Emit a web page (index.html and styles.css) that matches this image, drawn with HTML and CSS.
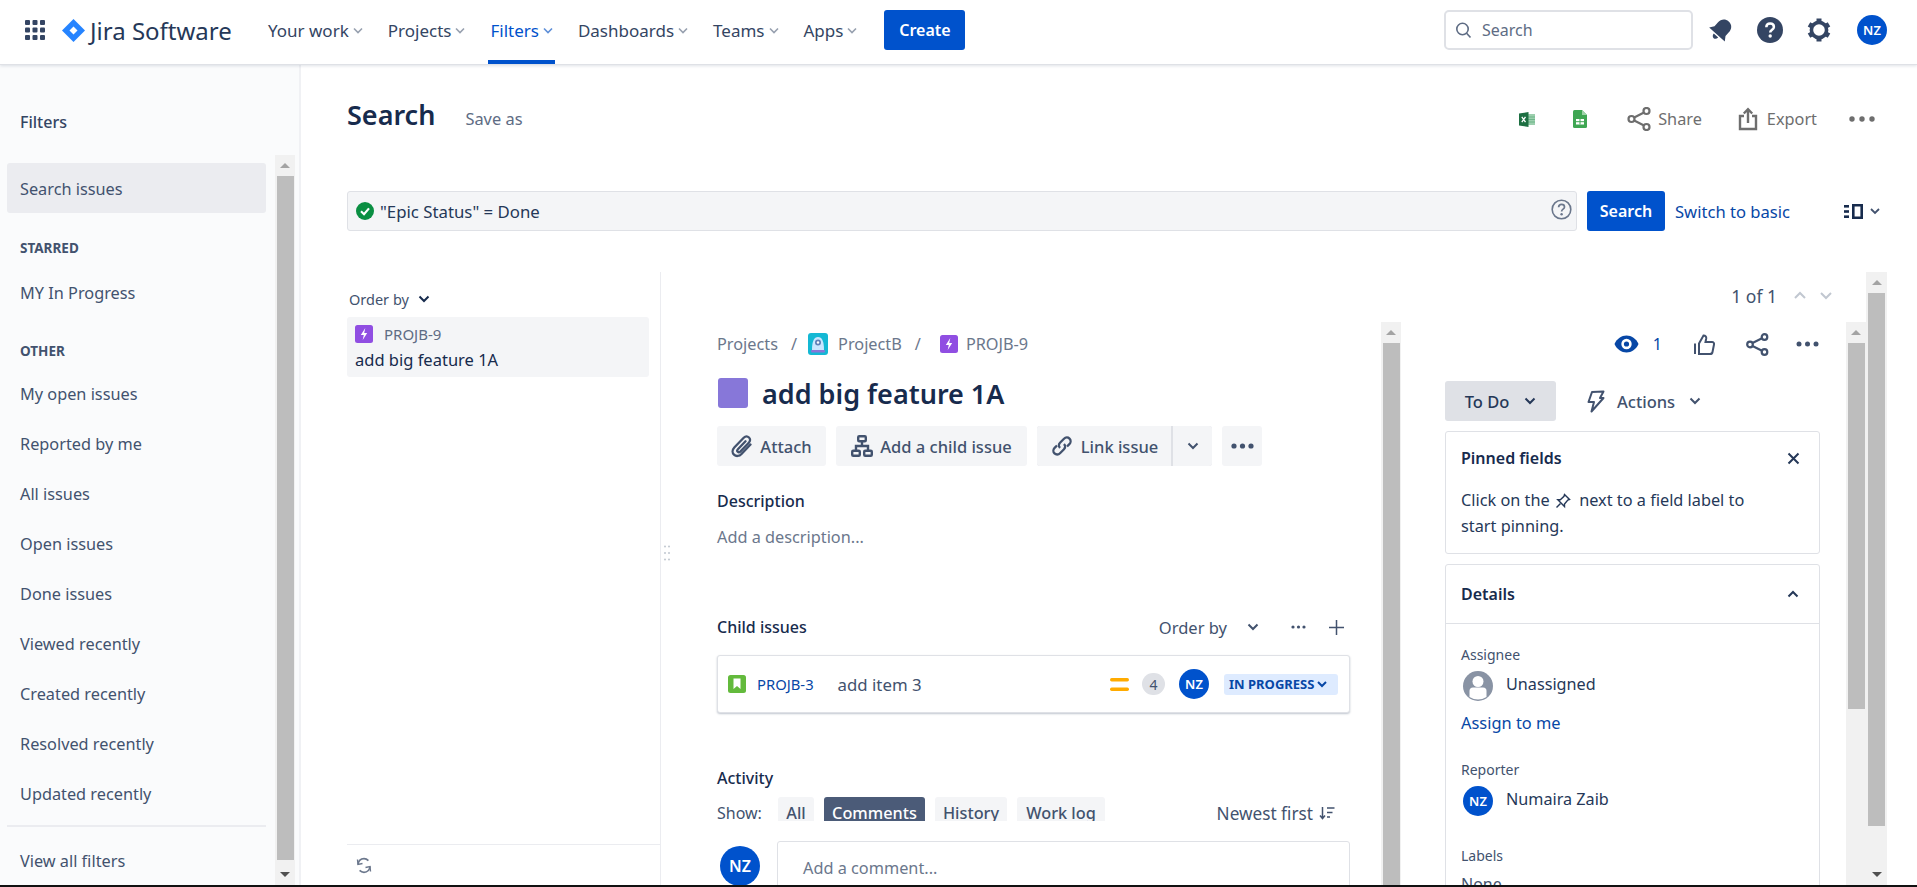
FILE: index.html
```html
<!DOCTYPE html>
<html lang="en">
<head>
  <meta charset="UTF-8">
  <title>Search - Jira</title>
  <link rel="stylesheet" href="styles.css">
</head>
<body>
<div class="page">

  <!-- top navigation -->
  <header class="topbar">
    <svg class="apps-icon" width="20" height="20" viewBox="0 0 20 20" fill="#344563"><rect width="5" height="5" rx="1"/><rect x="7.5" width="5" height="5" rx="1"/><rect x="15" width="5" height="5" rx="1"/><rect y="7.5" width="5" height="5" rx="1"/><rect x="7.5" y="7.5" width="5" height="5" rx="1"/><rect x="15" y="7.5" width="5" height="5" rx="1"/><rect y="15" width="5" height="5" rx="1"/><rect x="7.5" y="15" width="5" height="5" rx="1"/><rect x="15" y="15" width="5" height="5" rx="1"/></svg>
    <svg class="logo-mark" width="23" height="23" viewBox="0 0 23 23"><path d="M11.5 0 L23 11.5 L11.5 23 L0 11.5 Z" fill="#2684ff"/><path d="M11.5 7.5 L15.5 11.5 L11.5 15.5 L7.5 11.5 Z" fill="#fff"/></svg>
    <span class="logo-text">Jira Software</span>
    <nav class="nav">
      <a class="nav-item">Your work <svg class="nav-chev" width="10" height="7" viewBox="0 0 10 7"><path d="M1 1.5 L5 5.5 L9 1.5" fill="none" stroke="#97a0af" stroke-width="1.6"/></svg></a>
      <a class="nav-item">Projects <svg class="nav-chev" width="10" height="7" viewBox="0 0 10 7"><path d="M1 1.5 L5 5.5 L9 1.5" fill="none" stroke="#97a0af" stroke-width="1.6"/></svg></a>
      <a class="nav-item is-active">Filters <svg class="nav-chev" width="10" height="7" viewBox="0 0 10 7"><path d="M1 1.5 L5 5.5 L9 1.5" fill="none" stroke="#5e8fd8" stroke-width="1.6"/></svg></a>
      <a class="nav-item">Dashboards <svg class="nav-chev" width="10" height="7" viewBox="0 0 10 7"><path d="M1 1.5 L5 5.5 L9 1.5" fill="none" stroke="#97a0af" stroke-width="1.6"/></svg></a>
      <a class="nav-item">Teams <svg class="nav-chev" width="10" height="7" viewBox="0 0 10 7"><path d="M1 1.5 L5 5.5 L9 1.5" fill="none" stroke="#97a0af" stroke-width="1.6"/></svg></a>
      <a class="nav-item">Apps <svg class="nav-chev" width="10" height="7" viewBox="0 0 10 7"><path d="M1 1.5 L5 5.5 L9 1.5" fill="none" stroke="#97a0af" stroke-width="1.6"/></svg></a>
    </nav>
    <button class="btn-create">Create</button>
    <div class="top-right">
      <div class="top-search">
        <svg width="17" height="17" viewBox="0 0 17 17" fill="none" stroke="#5e6c84" stroke-width="1.6"><circle cx="7.5" cy="7" r="5.7"/><path d="M11.6 11.2 L15.5 15.5"/></svg>
        <span>Search</span>
      </div>
      <svg class="top-icon icon-bell" width="24" height="24" viewBox="0 0 24 24"><g transform="rotate(42 12 12)" fill="#344563"><path d="M12 0.5 C7 0.5 4.6 4.2 4.6 8.5 L4.6 13.5 L1.5 18 L22.5 18 L19.4 13.5 L19.4 8.5 C19.4 4.2 17 0.5 12 0.5 Z"/><path d="M9 19.5 L15 19.5 C14.8 21.8 13.5 23 12 23 C10.5 23 9.2 21.8 9 19.5 Z"/></g></svg>
      <svg class="top-icon icon-help" width="26" height="26" viewBox="0 0 26 26"><circle cx="13" cy="13" r="13" fill="#344563"/><path d="M9.3 10.2 C9.4 7.8 11 6.6 13.1 6.6 C15.3 6.6 16.9 7.9 16.9 9.9 C16.9 12.8 13.2 12.7 13.2 15.6" fill="none" stroke="#fff" stroke-width="2.5"/><circle cx="13.2" cy="19" r="1.7" fill="#fff"/></svg>
      <svg class="top-icon icon-gear" width="24" height="24" viewBox="0 0 24 24"><circle cx="12" cy="12" r="7.6" fill="none" stroke="#344563" stroke-width="3.6"/><g stroke="#344563" stroke-width="5"><path d="M12 0.5 L12 4.5"/><path d="M12 19.5 L12 23.5"/><path d="M2 6.3 L5.5 8.3"/><path d="M18.5 15.7 L22 17.7"/><path d="M2 17.7 L5.5 15.7"/><path d="M18.5 8.3 L22 6.3"/></g></svg>
      <span class="avatar">NZ</span>
    </div>
  </header>

  <div class="content">

    <!-- filters sidebar -->
    <aside class="sidebar">
      <div class="side-col">
        <h3 class="side-title">Filters</h3>
        <a class="side-item is-selected">Search issues</a>
        <div class="side-group">Starred</div>
        <a class="side-item">MY In Progress</a>
        <div class="side-group side-group-other">Other</div>
        <a class="side-item">My open issues</a>
        <a class="side-item">Reported by me</a>
        <a class="side-item">All issues</a>
        <a class="side-item">Open issues</a>
        <a class="side-item">Done issues</a>
        <a class="side-item">Viewed recently</a>
        <a class="side-item">Created recently</a>
        <a class="side-item">Resolved recently</a>
        <a class="side-item">Updated recently</a>
        <div class="side-rule"></div>
        <a class="side-item">View all filters</a>
      </div>
      <div class="scrollbar side-scroll">
        <span class="sb-up"></span>
        <span class="sb-thumb side-thumb"></span>
        <span class="sb-down"></span>
      </div>
    </aside>

    <main class="main">
      <div class="page-head">
        <h1 class="page-title">Search</h1>
        <span class="save-as">Save as</span>
        <div class="head-actions">
          <svg class="act-xls" width="16" height="15" viewBox="0 0 16 15"><rect x="6" y="2" width="10" height="11" fill="#9ccfae"/><path d="M7 5 L16 5 M7 7.5 L16 7.5 M7 10 L16 10" stroke="#5fae7e" stroke-width="0.8"/><path d="M0 1.5 L9.5 0 L9.5 15 L0 13.5 Z" fill="#1d6f42"/><path d="M2.8 4.8 L6.5 10.2 M6.5 4.8 L2.8 10.2" stroke="#fff" stroke-width="1.3"/></svg>
          <svg class="act-sheet" width="14" height="18" viewBox="0 0 14 18"><path d="M1.5 0 L9 0 L14 5 L14 16.5 Q14 18 12.5 18 L1.5 18 Q0 18 0 16.5 L0 1.5 Q0 0 1.5 0 Z" fill="#3fa653"/><path d="M9 0 L14 5 L9 5 Z" fill="#9dd3a8"/><rect x="3" y="9" width="8" height="5.5" fill="#fff"/><path d="M7 9 L7 14.5 M3 11.7 L11 11.7" stroke="#3fa653" stroke-width="1"/></svg>
          <span class="act-link act-share">
            <svg width="24" height="24" viewBox="0 0 24 24" fill="none" stroke="#6e6e6e" stroke-width="2.2"><circle cx="4.5" cy="12" r="3"/><circle cx="19.5" cy="4" r="3"/><circle cx="19.5" cy="20" r="3"/><path d="M7.2 10.5 L17 5.5 M7.2 13.5 L17 18.5"/></svg>
            Share
          </span>
          <span class="act-link act-export">
            <svg width="20" height="24" viewBox="0 0 20 24" fill="none" stroke="#6e6e6e" stroke-width="2.4"><path d="M6 9 L2 9 L2 22 L18 22 L18 9 L14 9"/><path d="M10 16 L10 2.5 M5.8 6.5 L10 2.2 L14.2 6.5"/></svg>
            Export
          </span>
          <svg class="act-more" width="26" height="6" viewBox="0 0 26 6" fill="#6e6e6e"><circle cx="3" cy="3" r="2.7"/><circle cx="13" cy="3" r="2.7"/><circle cx="23" cy="3" r="2.7"/></svg>
        </div>
      </div>

      <div class="jql-row">
        <div class="jql-input">
          <svg width="18" height="18" viewBox="0 0 18 18"><circle cx="9" cy="9" r="9" fill="#0a8f42"/><path d="M5 9.3 L8 12.2 L13 6.4" fill="none" stroke="#fff" stroke-width="2.2"/></svg>
          <span class="jql-text">"Epic Status" = Done</span>
          <svg class="jql-help" width="21" height="21" viewBox="0 0 21 21"><circle cx="10.5" cy="10.5" r="9.3" fill="none" stroke="#6b778c" stroke-width="1.6"/><path d="M7.6 8.2 C7.7 6.4 8.9 5.4 10.6 5.4 C12.3 5.4 13.5 6.4 13.5 7.9 C13.5 10.2 10.6 10.1 10.6 12.5" fill="none" stroke="#6b778c" stroke-width="1.7"/><circle cx="10.6" cy="15.2" r="1.2" fill="#6b778c"/></svg>
        </div>
        <button class="btn-primary">Search</button>
        <a class="switch-link">Switch to basic</a>
        <div class="view-switch">
          <svg width="19" height="15" viewBox="0 0 19 15" fill="#172b4d"><rect y="1" width="5" height="2.6"/><rect y="6.2" width="5" height="2.6"/><rect y="11.4" width="5" height="2.6"/><path d="M8 0 L19 0 L19 15 L8 15 Z M10.6 2.6 L10.6 12.4 L16.4 12.4 L16.4 2.6 Z" fill-rule="evenodd"/></svg>
          <svg width="10" height="7" viewBox="0 0 10 7"><path d="M1 1 L5 5 L9 1" fill="none" stroke="#42526e" stroke-width="1.8"/></svg>
        </div>
      </div>

      <div class="results">

        <!-- issue list -->
        <section class="list-panel">
          <div class="order-by">Order by
            <svg width="12" height="8" viewBox="0 0 12 8"><path d="M1.5 1.5 L6 6 L10.5 1.5" fill="none" stroke="#172b4d" stroke-width="2"/></svg>
          </div>
          <div class="list-card">
            <div class="list-key">
              <svg class="epic-icon" width="18" height="18" viewBox="0 0 18 18"><rect width="18" height="18" rx="2.5" fill="#904ee2"/><path d="M10.3 3 L5.8 10 L8.8 10 L7.7 15 L12.2 8 L9.2 8 Z" fill="#fff"/></svg>
              PROJB-9
            </div>
            <div class="list-summary">add big feature 1A</div>
          </div>
          <div class="list-foot">
            <svg width="16" height="17" viewBox="0 0 16 17" fill="none" stroke="#6b778c" stroke-width="1.7"><path d="M2 7.5 C2.5 4 5 1.7 8 1.7 C9.8 1.7 11.2 2.4 12.4 3.6"/><path d="M14 9.5 C13.5 13 11 15.3 8 15.3 C6.2 15.3 4.8 14.6 3.6 13.4"/><path d="M1.5 2.5 L2 7.5 L6.5 6.5" stroke-width="1.4"/><path d="M14.5 14.5 L14 9.5 L9.5 10.5" stroke-width="1.4"/></svg>
          </div>
        </section>
        <div class="list-divider">
          <svg class="drag-dots" width="6" height="16" viewBox="0 0 6 16" fill="#c1c7d0"><circle cx="1" cy="1.5" r="1"/><circle cx="5" cy="1.5" r="1"/><circle cx="1" cy="8" r="1"/><circle cx="5" cy="8" r="1"/><circle cx="1" cy="14.5" r="1"/><circle cx="5" cy="14.5" r="1"/></svg>
        </div>

        <!-- issue detail -->
        <section class="detail">
          <div class="pager">
            <span class="pager-text">1 of 1</span>
            <svg width="14" height="9" viewBox="0 0 14 9"><path d="M2 7 L7 2 L12 7" fill="none" stroke="#c1c7d0" stroke-width="2"/></svg>
            <svg width="14" height="9" viewBox="0 0 14 9"><path d="M2 2 L7 7 L12 2" fill="none" stroke="#c1c7d0" stroke-width="2"/></svg>
          </div>
          <div class="detail-cols">
            <div class="issue-main">
              <div class="crumbs">
                <span>Projects</span><span class="crumb-sep">/</span>
                <svg class="crumb-project" width="20" height="22" viewBox="0 0 20 22"><rect width="20" height="22" rx="3" fill="#14b8d4"/><path d="M4 17 Q4 4 10 4 Q16 4 16 17 Z" fill="#c9e6ff"/><circle cx="10" cy="9.5" r="3" fill="#5f7fb8"/><circle cx="10" cy="9.5" r="1.2" fill="#fff"/><rect x="3" y="17" width="14" height="2.5" rx="1" fill="#8777d9"/></svg>
                <span>ProjectB</span><span class="crumb-sep">/</span>
                <svg class="crumb-epic" width="18" height="18" viewBox="0 0 18 18"><rect width="18" height="18" rx="2.5" fill="#904ee2"/><path d="M10.3 3 L5.8 10 L8.8 10 L7.7 15 L12.2 8 L9.2 8 Z" fill="#fff"/></svg>
                <span>PROJB-9</span>
              </div>
              <div class="issue-title">
                <span class="epic-swatch"></span>
                <h2>add big feature 1A</h2>
              </div>
              <div class="issue-actions">
                <button class="btn-sub btn-attach">
                  <svg width="22" height="23" viewBox="0 0 22 23" fill="none" stroke="#42526e" stroke-width="2.3" stroke-linecap="round"><path d="M19.5 9.5 L10.5 19 C8.3 21.4 5 21.6 3 19.7 C1 17.8 1.2 14.8 3.3 12.5 L12.7 2.8 C14.3 1.2 16.5 1.1 18 2.5 C19.5 3.9 19.4 6 17.8 7.7 L9.3 16.6 C8.5 17.4 7.4 17.5 6.7 16.8 C6 16.1 6.1 15.1 6.9 14.2 L14.5 6.3"/></svg>
                  Attach
                </button>
                <button class="btn-sub btn-child">
                  <svg width="22" height="22" viewBox="0 0 22 22" fill="none" stroke="#42526e" stroke-width="2.4"><rect x="7.2" y="1.2" width="7.6" height="5" rx="1"/><rect x="1.2" y="15.8" width="7.6" height="5" rx="1"/><rect x="13.2" y="15.8" width="7.6" height="5" rx="1"/><path d="M11 6.2 L11 11 M5 15.8 L5 11 L17 11 L17 15.8"/></svg>
                  Add a child issue
                </button>
                <div class="btn-split">
                  <button class="btn-sub btn-link-issue">
                    <svg width="24" height="24" viewBox="0 0 24 24" fill="none" stroke="#42526e" stroke-width="2.3"><path d="M10 14 C8.5 12.5 8.5 10.2 10 8.7 L14 4.7 C15.6 3.1 18 3.1 19.5 4.6 C21 6.1 21 8.5 19.4 10.1 L17 12.5"/><path d="M14 10 C15.5 11.5 15.5 13.8 14 15.3 L10 19.3 C8.4 20.9 6 20.9 4.5 19.4 C3 17.9 3 15.5 4.6 13.9 L7 11.5"/></svg>
                    Link issue
                  </button>
                  <button class="btn-sub btn-link-more">
                    <svg width="12" height="8" viewBox="0 0 12 8"><path d="M1.5 1.5 L6 6 L10.5 1.5" fill="none" stroke="#42526e" stroke-width="2"/></svg>
                  </button>
                </div>
                <button class="btn-sub btn-dots">
                  <svg width="23" height="6" viewBox="0 0 23 6" fill="#42526e"><circle cx="3" cy="3" r="2.6"/><circle cx="11.5" cy="3" r="2.6"/><circle cx="20" cy="3" r="2.6"/></svg>
                </button>
              </div>
              <h4 class="section-label desc-label">Description</h4>
              <div class="desc-placeholder">Add a description...</div>

              <div class="child-head">
                <h4 class="section-label">Child issues</h4>
                <div class="child-tools">
                  <span>Order by</span>
                  <svg class="child-chev" width="12" height="8" viewBox="0 0 12 8"><path d="M1.5 1.5 L6 6 L10.5 1.5" fill="none" stroke="#42526e" stroke-width="2"/></svg>
                  <svg class="child-dots" width="15" height="4" viewBox="0 0 15 4" fill="#42526e"><circle cx="2" cy="2" r="1.6"/><circle cx="7.5" cy="2" r="1.6"/><circle cx="13" cy="2" r="1.6"/></svg>
                  <svg width="15" height="15" viewBox="0 0 15 15"><path d="M7.5 0 L7.5 15 M0 7.5 L15 7.5" stroke="#42526e" stroke-width="1.5"/></svg>
                </div>
              </div>
              <div class="child-card">
                <svg width="18" height="18" viewBox="0 0 18 18"><rect width="18" height="18" rx="2.5" fill="#63ba3c"/><path d="M5.5 3.5 L12.5 3.5 L12.5 14 L9 11 L5.5 14 Z" fill="#fff"/></svg>
                <a class="child-key">PROJB-3</a>
                <span class="child-name">add item 3</span>
                <svg class="child-prio" width="19" height="13" viewBox="0 0 19 13" fill="#ffab00"><rect width="19" height="3.4" rx="1.7"/><rect y="9.6" width="19" height="3.4" rx="1.7"/></svg>
                <span class="child-count">4</span>
                <span class="avatar child-avatar">NZ</span>
                <span class="status-pill">IN PROGRESS
                  <svg width="10" height="7" viewBox="0 0 10 7"><path d="M1 1 L5 5 L9 1" fill="none" stroke="#0747a6" stroke-width="2"/></svg>
                </span>
              </div>

              <h4 class="section-label activity-label">Activity</h4>
              <div class="activity-row">
                <span class="show-label">Show:</span>
                <span class="tab tab-all">All</span>
                <span class="tab tab-on">Comments</span>
                <span class="tab tab-history">History</span>
                <span class="tab tab-log">Work log</span>
                <span class="newest">Newest first
                  <svg width="16" height="14" viewBox="0 0 16 14" fill="none" stroke="#42526e" stroke-width="1.5"><path d="M3.5 1 L3.5 12 M1 9.5 L3.5 12.5 L6 9.5"/><path d="M8 2 L15.5 2 M8 6.5 L13.5 6.5 M8 11 L11 11"/></svg>
                </span>
              </div>
              <div class="comment-row">
                <span class="avatar comment-avatar">NZ</span>
                <div class="comment-box">Add a comment...</div>
              </div>
            </div>

            <div class="scrollbar col-scroll">
              <span class="sb-up"></span>
              <span class="sb-thumb col-thumb"></span>
            </div>

            <div class="issue-side">
              <div class="side-tools">
                <svg width="25" height="18" viewBox="0 0 25 18"><path d="M0.5 9 C3 3.5 7.5 0.5 12.5 0.5 C17.5 0.5 22 3.5 24.5 9 C22 14.5 17.5 17.5 12.5 17.5 C7.5 17.5 3 14.5 0.5 9 Z" fill="#0747a6"/><circle cx="12.5" cy="9" r="5.2" fill="#fff"/><circle cx="12.5" cy="9" r="2.6" fill="#0747a6"/></svg>
                <span class="watch-count">1</span>
                <svg class="tool-like" width="21" height="21" viewBox="0 0 21 21" fill="none" stroke="#42526e" stroke-width="2"><path d="M1 9.5 L1 20"/><path d="M5 20 L5 9.5 L9.5 1.5 C11.5 1.5 12.5 2.8 12.2 4.5 L11.5 8 L18 8 C19.5 8 20.3 9.2 20 10.5 L18.5 18 C18.3 19.3 17.3 20 16 20 Z"/></svg>
                <svg class="tool-share" width="23" height="23" viewBox="0 0 23 23" fill="none" stroke="#42526e" stroke-width="2.2"><circle cx="4" cy="11.5" r="2.8"/><circle cx="18.5" cy="4" r="2.8"/><circle cx="18.5" cy="19" r="2.8"/><path d="M6.5 10 L16 5.3 M6.5 13 L16 17.7"/></svg>
                <svg class="tool-dots" width="23" height="6" viewBox="0 0 23 6" fill="#42526e"><circle cx="3" cy="3" r="2.5"/><circle cx="11.5" cy="3" r="2.5"/><circle cx="20" cy="3" r="2.5"/></svg>
              </div>
              <div class="status-row">
                <button class="btn-status">To Do
                  <svg width="12" height="8" viewBox="0 0 12 8"><path d="M1.5 1.5 L6 6 L10.5 1.5" fill="none" stroke="#253858" stroke-width="2"/></svg>
                </button>
                <span class="actions-btn">
                  <svg width="18" height="23" viewBox="0 0 18 23" fill="none" stroke="#42526e" stroke-width="2" stroke-linejoin="round"><path d="M5 2 L16.5 1.5 L13 8 L16.5 8 L4.5 21.5 L7 12 L1.5 12 Z"/></svg>
                  <span class="actions-label">Actions</span>
                  <svg width="12" height="8" viewBox="0 0 12 8"><path d="M1.5 1.5 L6 6 L10.5 1.5" fill="none" stroke="#42526e" stroke-width="2"/></svg>
                </span>
              </div>
              <div class="panel pinned">
                <div class="pinned-head">
                  <strong>Pinned fields</strong>
                  <svg width="13" height="13" viewBox="0 0 13 13"><path d="M1.5 1.5 L11.5 11.5 M11.5 1.5 L1.5 11.5" stroke="#253858" stroke-width="2"/></svg>
                </div>
                <p class="pinned-text">Click on the
                  <svg class="pin-icon" width="16" height="16" viewBox="0 0 16 16" fill="none" stroke="#253858" stroke-width="1.4"><path d="M9.5 1.5 L14.5 6.5 L12.8 7 L9.5 11 L9.5 13.5 L2.8 6.8 L5.3 6.8 L9 3.3 Z"/><path d="M5.5 10.5 L1.5 14.5"/></svg>
                  next to a field label to start pinning.</p>
              </div>
              <div class="panel details">
                <div class="details-head">
                  <strong>Details</strong>
                  <svg width="12" height="8" viewBox="0 0 12 8"><path d="M1.5 6.5 L6 2 L10.5 6.5" fill="none" stroke="#253858" stroke-width="2"/></svg>
                </div>
                <div class="details-body">
                  <div class="field-label">Assignee</div>
                  <div class="field-person">
                    <svg width="30" height="30" viewBox="0 0 30 30"><circle cx="15" cy="15" r="15" fill="#8993a4"/><circle cx="15" cy="10.5" r="5.5" fill="#fff"/><path d="M6.5 20 Q6.5 16.5 10 16.5 L20 16.5 Q23.5 16.5 23.5 20 L23.5 26 Q15 31 6.5 26 Z" fill="#fff"/></svg>
                    <span class="person-name">Unassigned</span>
                  </div>
                  <a class="assign-link">Assign to me</a>
                  <div class="field-label reporter-label">Reporter</div>
                  <div class="field-person">
                    <span class="avatar">NZ</span>
                    <span class="person-name">Numaira Zaib</span>
                  </div>
                  <div class="field-label labels-label">Labels</div>
                  <div class="field-none">None</div>
                </div>
              </div>
            </div>

            <div class="scrollbar col-scroll">
              <span class="sb-up"></span>
              <span class="sb-thumb side-col-thumb"></span>
            </div>
          </div>
        </section>

        <div class="scrollbar outer-scroll">
          <span class="sb-up"></span>
          <span class="sb-thumb outer-thumb"></span>
          <span class="sb-down"></span>
        </div>
      </div>
    </main>
  </div>
</div>
</body>
</html>
```

FILE: styles.css
```css
* {
  box-sizing: border-box;
}

html, body {
  margin: 0;
  height: 100%;
  overflow: hidden;
}

body {
  font-family: "Noto Sans", "Open Sans", sans-serif;
  font-size: 16px;
  color: #172b4d;
  background: #fff;
}

button {
  font-family: inherit;
  border: 0;
  cursor: pointer;
}

h1, h2, h3, h4, p {
  margin: 0;
}

.page {
  height: 887px;
  display: flex;
  flex-direction: column;
  border-bottom: 2px solid #111;
}

/* top bar */
.topbar {
  height: 65px;
  flex: none;
  display: flex;
  align-items: center;
  padding: 0 0 4px 25px;
  background: #fff;
  border-bottom: 1px solid #dfe1e6;
  box-shadow: 0 1px 3px rgba(9, 30, 66, 0.13);
  position: relative;
  z-index: 2;
}

.logo-mark {
  margin-left: 17px;
}

.logo-text {
  margin-left: 5px;
  font-size: 24px;
  color: #253858;
  width: 143px;
  white-space: nowrap;
}

.nav {
  display: flex;
  align-self: stretch;
  margin: 0 0 -4px 33px;
  gap: 21px;
}

.nav-item {
  display: flex;
  align-items: center;
  gap: 4px;
  font-size: 17px;
  color: #344563;
  border-bottom: 4px solid transparent;
  padding: 0 2px;
}

.nav-item.is-active {
  color: #0052cc;
  border-bottom-color: #0052cc;
}

.btn-create {
  margin-left: 25px;
  width: 81px;
  height: 40px;
  background: #0052cc;
  color: #fff;
  font-size: 16px;
  font-weight: 600;
  border-radius: 3px;
}

.top-right {
  margin-left: auto;
  margin-right: 30px;
  display: flex;
  align-items: center;
}

.top-search {
  width: 249px;
  height: 40px;
  border: 2px solid #dfe1e6;
  border-radius: 5px;
  display: flex;
  align-items: center;
  gap: 10px;
  padding-left: 9px;
  color: #5e6c84;
  font-size: 16px;
}

.top-icon {
  flex: none;
}

.icon-bell {
  margin-left: 16px;
}

.icon-help {
  margin-left: 24px;
}

.icon-gear {
  margin-left: 24px;
}

.avatar {
  width: 30px;
  height: 30px;
  flex: none;
  border-radius: 50%;
  background: #0052cc;
  color: #fff;
  font-size: 13px;
  font-weight: 600;
  display: flex;
  align-items: center;
  justify-content: center;
}

.top-right .avatar {
  margin-left: 26px;
}

/* layout below the bar */
.content {
  flex: 1;
  min-height: 0;
  display: flex;
}

.sidebar {
  width: 301px;
  flex: none;
  display: flex;
  background: #fafbfc;
  border-right: 2px solid #f0f1f4;
}

.side-col {
  width: 275px;
  flex: none;
  padding: 47px 0 0 7px;
  display: flex;
  flex-direction: column;
}

.side-title {
  font-size: 16px;
  font-weight: 500;
  color: #344563;
  padding-left: 13px;
  line-height: 20px;
  margin-bottom: 31px;
}

.side-item {
  height: 50px;
  flex: none;
  width: 259px;
  display: flex;
  align-items: center;
  padding: 2px 0 0 13px;
  color: #42526e;
  font-size: 16.3px;
}

.side-item.is-selected {
  background: #ebecf0;
  border-radius: 3px;
}

.side-group {
  font-size: 13.5px;
  font-weight: 700;
  color: #42526e;
  text-transform: uppercase;
  padding-left: 13px;
  line-height: 18px;
  margin-top: 26px;
  margin-bottom: 10px;
}

.side-group-other {
  margin-top: 25px;
  margin-bottom: 8px;
}

.side-rule {
  width: 259px;
  height: 2px;
  flex: none;
  margin-top: 7px;
  margin-bottom: 8px;
  background: #ebecf0;
}

/* hand drawn scrollbars, as in the old Windows look */
.scrollbar {
  width: 20px;
  flex: none;
  background: #f1f1f1;
  display: flex;
  flex-direction: column;
  align-items: center;
}

.sb-up, .sb-down {
  height: 21px;
  flex: none;
  display: flex;
  align-items: center;
  justify-content: center;
}

.sb-up::before {
  content: "";
  border: 5px solid transparent;
  border-top: 0;
  border-bottom: 5px solid #a3a3a3;
}

.sb-down {
  margin-top: auto;
}

.sb-down::before {
  content: "";
  border: 5px solid transparent;
  border-bottom: 0;
  border-top: 5px solid #505050;
}

.sb-thumb {
  width: 17px;
  flex: none;
  background: #bdbdbd;
}

.side-scroll {
  margin-top: 90px;
}

.side-thumb {
  height: 684px;
}

.col-thumb {
  flex: 1;
}

.side-col-thumb {
  height: 366px;
}

.outer-thumb {
  height: 533px;
}

/* main area */
.main {
  flex: 1;
  min-width: 0;
  display: flex;
  flex-direction: column;
  padding-left: 46px;
}

.page-head {
  height: 100px;
  flex: none;
  display: flex;
  align-items: center;
}

.page-title {
  font-size: 27px;
  font-weight: 600;
  color: #172b4d;
  line-height: 36px;
}

.save-as {
  margin-left: 30px;
  margin-top: 6px;
  color: #5e6c84;
  font-size: 16.4px;
}

.head-actions {
  margin: 8px 42px 0 auto;
  display: flex;
  align-items: center;
}

.act-sheet {
  margin-left: 38px;
}

.act-link {
  display: flex;
  align-items: center;
  gap: 9px;
  color: #6e6e6e;
  font-size: 16.3px;
}

.act-share {
  margin-left: 40px;
  gap: 7px;
}

.act-export {
  margin-left: 36px;
}

.act-more {
  margin-left: 32px;
}

.jql-row {
  margin-top: 26px;
  height: 40px;
  flex: none;
  display: flex;
  align-items: center;
  padding-right: 37px;
}

.jql-input {
  width: 1230px;
  height: 40px;
  background: #f4f5f7;
  border: 1px solid #dfe1e6;
  border-radius: 3px;
  display: flex;
  align-items: center;
  padding: 0 3px 0 8px;
}

.jql-text {
  margin-left: 6px;
  font-size: 16.8px;
  color: #253858;
}

.jql-help {
  margin-left: auto;
  margin-right: 1px;
  margin-top: -3px;
}

.btn-primary {
  margin-left: 10px;
  width: 78px;
  height: 40px;
  background: #0052cc;
  color: #fff;
  font-size: 16px;
  font-weight: 600;
  border-radius: 3px;
}

.switch-link {
  margin-left: 10px;
  color: #0747a6;
  font-size: 16.6px;
}

.view-switch {
  margin-left: auto;
  display: flex;
  align-items: center;
  gap: 7px;
}

/* issue list + detail */
.results {
  margin-top: 41px;
  flex: 1;
  min-height: 0;
  display: flex;
  padding-right: 30px;
}

.list-panel {
  width: 313px;
  flex: none;
  display: flex;
  flex-direction: column;
}

.list-divider {
  width: 1px;
  flex: none;
  background: #ebecf0;
  position: relative;
}

.drag-dots {
  position: absolute;
  left: 4px;
  top: 273px;
}

.order-by {
  height: 45px;
  flex: none;
  display: flex;
  align-items: center;
  gap: 9px;
  padding: 8px 0 0 2px;
  font-size: 14.5px;
  color: #42526e;
}

.list-card {
  width: 302px;
  height: 60px;
  flex: none;
  background: #f4f5f7;
  border-radius: 3px;
  padding: 6px 8px 0 8px;
}

.list-key {
  display: flex;
  align-items: center;
  gap: 11px;
  height: 22px;
  font-size: 15px;
  color: #5e6c84;
}

.list-summary {
  margin-top: 3px;
  font-size: 16.5px;
  line-height: 24px;
  color: #172b4d;
}

.list-foot {
  margin-top: auto;
  height: 41px;
  border-top: 1px solid #ebecf0;
  display: flex;
  align-items: center;
  padding-left: 9px;
}

.detail {
  flex: 1;
  min-width: 0;
  display: flex;
  flex-direction: column;
  overflow: hidden;
}

.pager {
  height: 50px;
  flex: none;
  display: flex;
  align-items: center;
  justify-content: flex-end;
  gap: 12px;
  padding: 0 33px 3px 0;
  font-size: 17.5px;
  color: #42526e;
}

.pager-text {
  margin-right: 4px;
}

.detail-cols {
  flex: 1;
  min-height: 0;
  display: flex;
}

.issue-main {
  width: 720px;
  flex: none;
  padding: 11px 31px 0 56px;
  overflow: hidden;
}

.crumbs {
  display: flex;
  align-items: center;
  height: 22px;
  gap: 8px;
  color: #6b778c;
  font-size: 16.3px;
}

.crumb-sep {
  margin: 0 5px;
}

.crumb-project {
  margin: 0 2px 0 -2px;
}

.crumb-epic {
  margin-left: 6px;
}

.issue-title {
  margin-top: 19px;
  display: flex;
  align-items: center;
  gap: 14px;
  height: 38px;
}

.epic-swatch {
  width: 30px;
  height: 30px;
  flex: none;
  margin-left: 1px;
  background: #8777d9;
  border-radius: 3px;
}

.issue-title h2 {
  font-size: 27px;
  font-weight: 600;
  color: #172b4d;
}

.issue-actions {
  margin-top: 14px;
  display: flex;
  gap: 10px;
  height: 40px;
}

.btn-sub {
  height: 40px;
  background: #f4f5f7;
  color: #42526e;
  font-size: 16.5px;
  font-weight: 500;
  border-radius: 3px;
  display: flex;
  align-items: center;
  justify-content: center;
  gap: 7px;
  padding: 0;
}

.btn-attach {
  width: 109px;
}

.btn-child {
  width: 191px;
}

.btn-split {
  display: flex;
  gap: 2px;
  background: #dfe1e6;
  border-radius: 3px;
}

.btn-link-issue {
  width: 134px;
  border-radius: 3px 0 0 3px;
}

.btn-link-more {
  width: 39px;
  border-radius: 0 3px 3px 0;
}

.btn-dots {
  width: 40px;
}

.section-label {
  font-size: 16px;
  font-weight: 500;
  color: #172b4d;
  line-height: 22px;
}

.desc-label {
  margin-top: 24px;
}

.desc-placeholder {
  margin-top: 14px;
  color: #6b778c;
  font-size: 16.3px;
  line-height: 22px;
}

.child-head {
  margin-top: 68px;
  display: flex;
  align-items: center;
  justify-content: space-between;
  height: 22px;
}

.child-tools {
  display: flex;
  align-items: center;
  color: #42526e;
  font-size: 16.5px;
  padding-right: 6px;
}

.child-chev {
  margin-left: 20px;
}

.child-dots {
  margin: 0 23px 0 32px;
}

.child-card {
  margin-top: 17px;
  height: 58px;
  background: #fff;
  border: 1px solid #dfe1e6;
  border-radius: 3px;
  box-shadow: 0 1px 2px rgba(9, 30, 66, 0.25);
  display: flex;
  align-items: center;
  padding: 0 11px 0 10px;
}

.child-key {
  margin-left: 11px;
  color: #0747a6;
  font-size: 14.8px;
}

.child-name {
  margin-left: 24px;
  font-size: 16.8px;
  color: #42526e;
}

.child-prio {
  margin-left: auto;
}

.child-count {
  margin-left: 13px;
  width: 23px;
  height: 22px;
  border-radius: 11px;
  background: #dfe1e6;
  color: #42526e;
  font-size: 14px;
  display: flex;
  align-items: center;
  justify-content: center;
}

.child-avatar {
  margin-left: 14px;
}

.status-pill {
  margin-left: 15px;
  width: 114px;
  height: 21px;
  background: #deebff;
  border-radius: 3px;
  color: #0747a6;
  font-size: 13px;
  font-weight: 700;
  white-space: nowrap;
  display: flex;
  align-items: center;
  gap: 3px;
  padding-left: 5px;
}

.activity-label {
  margin-top: 54px;
}

.activity-row {
  margin-top: 8px;
  height: 24px;
  display: flex;
  align-items: flex-start;
  overflow: hidden;
}

.show-label {
  width: 61px;
  color: #42526e;
  font-size: 16px;
  line-height: 32px;
}

.tab {
  height: 32px;
  display: flex;
  align-items: center;
  justify-content: center;
  background: #f4f5f7;
  color: #42526e;
  border-radius: 3px;
  font-size: 16.3px;
  font-weight: 500;
  margin-right: 10px;
}

.tab-all {
  width: 36px;
}

.tab-on {
  width: 101px;
  background: #4b5b78;
  color: #fff;
}

.tab-history {
  width: 72px;
}

.tab-log {
  width: 88px;
}

.newest {
  margin-left: auto;
  margin-right: 15px;
  display: flex;
  align-items: center;
  gap: 6px;
  height: 32px;
  color: #42526e;
  font-size: 17.2px;
}

.comment-row {
  margin-top: 20px;
  display: flex;
  gap: 17px;
  padding-left: 3px;
}

.comment-avatar {
  width: 40px;
  height: 40px;
  margin-top: 5px;
  font-size: 16px;
}

.comment-box {
  flex: 1;
  height: 60px;
  border: 1px solid #dfe1e6;
  border-radius: 3px;
  padding: 15px 0 0 25px;
  color: #6b778c;
  font-size: 16.3px;
}

/* right column of the issue */
.issue-side {
  width: 445px;
  flex: none;
  padding: 11px 27px 0 44px;
  overflow: hidden;
}

.side-tools {
  height: 22px;
  display: flex;
  align-items: center;
  justify-content: flex-end;
}

.watch-count {
  margin-left: 14px;
  color: #0747a6;
  font-size: 16px;
}

.tool-like {
  margin-left: 32px;
}

.tool-share {
  margin-left: 31px;
}

.tool-dots {
  margin-left: 27px;
}

.status-row {
  margin-top: 26px;
  height: 40px;
  display: flex;
  align-items: center;
}

.btn-status {
  width: 111px;
  height: 40px;
  background: #dfe1e6;
  color: #253858;
  font-size: 16.5px;
  font-weight: 500;
  border-radius: 3px;
  display: flex;
  align-items: center;
  justify-content: center;
  gap: 15px;
}

.actions-btn {
  margin-left: 31px;
  display: flex;
  align-items: center;
  color: #42526e;
  font-size: 16.5px;
  font-weight: 500;
}

.actions-label {
  margin: 0 14px 0 12px;
}

.panel {
  width: 375px;
  background: #fff;
  border: 1px solid #dfe1e6;
  border-radius: 3px;
}

.pinned {
  margin-top: 10px;
  height: 123px;
  padding: 15px 19px 0 13px;
}

.pinned-head {
  display: flex;
  align-items: center;
  justify-content: space-between;
  height: 22px;
  font-size: 16px;
  padding-left: 2px;
}

.pinned-head strong, .details-head strong {
  font-weight: 600;
  color: #172b4d;
}

.pinned-text {
  margin-top: 18px;
  padding-left: 2px;
  font-size: 16.3px;
  line-height: 26px;
  color: #253858;
  max-width: 305px;
}

.pin-icon {
  vertical-align: -3px;
  margin: 0 4px 0 1px;
}

.details {
  margin-top: 10px;
  height: 400px;
}

.details-head {
  height: 59px;
  display: flex;
  align-items: center;
  justify-content: space-between;
  padding: 0 20px 0 15px;
  border-bottom: 1px solid #dfe1e6;
  font-size: 16px;
}

.details-body {
  padding: 21px 15px 0 15px;
}

.field-label {
  font-size: 14px;
  line-height: 20px;
  color: #42526e;
}

.field-person {
  margin-top: 6px;
  height: 30px;
  display: flex;
  align-items: center;
  gap: 13px;
  padding-left: 2px;
  font-size: 16.2px;
  color: #253858;
}

.person-name {
  margin-top: -4px;
}

.assign-link {
  display: block;
  margin-top: 11px;
  line-height: 22px;
  color: #0747a6;
  font-size: 16.4px;
}

.reporter-label {
  margin-top: 26px;
}

.labels-label {
  margin-top: 30px;
}

.field-none {
  margin-top: 7px;
  font-size: 16px;
  line-height: 22px;
  color: #42526e;
}

.outer-scroll {
  width: 21px;
}
```
